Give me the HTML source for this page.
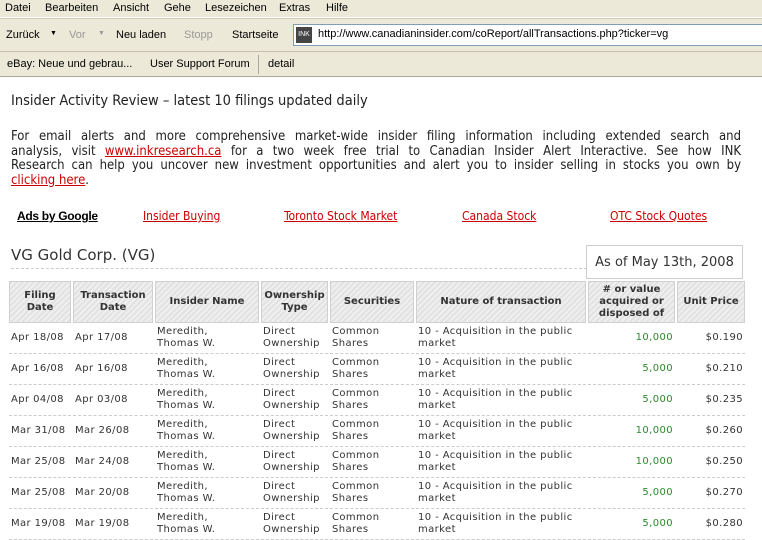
<!DOCTYPE html>
<html><head><meta charset="utf-8"><style>
*{margin:0;padding:0;box-sizing:border-box}
body{width:762px;height:529px;overflow:hidden;background:#fff;font-family:"DejaVu Sans Condensed","DejaVu Sans",sans-serif;position:relative}
.chrome{position:absolute;left:0;width:762px;background:#ece9d8;font-family:"Liberation Sans",sans-serif;font-size:11px;color:#000}
.m{top:0;height:18px;border-bottom:1px solid #fff}
.t{top:18px;height:34px;border-top:1px solid #d0ccb8;border-bottom:1px solid #c5c1ae}
.b{top:52px;height:25px;border-bottom:1px solid #aca899}
.chrome span{position:absolute}
.u{position:absolute;left:293px;top:5px;width:475px;height:22px;background:#fff;border:1px solid #7f9db9}
.abs{position:absolute}
.line{display:block;text-align:justify;text-align-last:justify;white-space:nowrap;height:14.5px}
a{color:#c00;text-decoration:underline}
.p{position:absolute;left:11px;width:730px;top:130px;font-size:13px;color:#222;line-height:14.5px}
.ad{position:absolute;top:209px;font-size:12px;font-family:"DejaVu Sans Condensed",sans-serif}
table{position:absolute;left:7px;top:281px;border-collapse:separate;border-spacing:2px 0;font-family:"DejaVu Sans",sans-serif;font-size:10px;color:#333}
th{background:repeating-linear-gradient(135deg,#e2e2e2 0 2px,#efefef 2px 4px);border:1px solid #d0d0d0;font-weight:bold;height:42px;font-size:10px;line-height:12px;color:#333;text-align:center}
td{height:31px;border-bottom:1px dashed #ccc;line-height:12px;vertical-align:middle;padding-left:2px;letter-spacing:0.4px;white-space:nowrap}
td.n{color:#2a8a2a;text-align:right;padding-right:2px}
td.r{text-align:right;padding-right:2px}
</style></head><body>
<div class="chrome m"><span style="left:5px;top:2px">Datei</span><span style="left:45px;top:2px">Bearbeiten</span><span style="left:113px;top:2px">Ansicht</span><span style="left:164px;top:2px">Gehe</span><span style="left:205px;top:2px">Lesezeichen</span><span style="left:279px;top:2px">Extras</span><span style="left:326px;top:2px">Hilfe</span></div>
<div class="chrome t"><span style="left:6px;top:10px">Zurück</span><span style="left:50px;top:11px;font-size:7px">▼</span><span style="left:69px;top:10px;color:#999">Vor</span><span style="left:98px;top:11px;font-size:7px;color:#999">▼</span><span style="left:116px;top:10px">Neu laden</span><span style="left:184px;top:10px;color:#999">Stopp</span><span style="left:232px;top:10px">Startseite</span>
<div class="u"><span style="left:2px;top:2px;width:16px;height:16px;background:#444;color:#fff;font-size:7px;line-height:16px;text-align:center">INK</span><span style="left:24px;top:3px">http://www.canadianinsider.com/coReport/allTransactions.php?ticker=vg</span></div></div>
<div class="chrome b"><span style="left:7px;top:6px">eBay: Neue und gebrau...</span><span style="left:150px;top:6px">User Support Forum</span><span style="left:258px;top:3px;height:19px;border-left:1px solid #aca899"></span><span style="left:268px;top:6px">detail</span></div>
<div class="abs" style="left:11px;top:93px;font-size:14.5px;color:#222">Insider Activity Review – latest 10 filings updated daily</div>
<div class="p"><span class="line">For email alerts and more comprehensive market-wide insider filing information including extended search and</span><span class="line">analysis, visit <a href="#">www.inkresearch.ca</a> for a two week free trial to Canadian Insider Alert Interactive. See how INK</span><span class="line">Research can help you uncover new investment opportunities and alert you to insider selling in stocks you own by</span><span style="display:block"><a href="#">clicking here</a>.</span></div>
<div class="ad" style="left:17px;font-weight:bold;color:#000;text-decoration:underline;font-family:'Liberation Sans',sans-serif;letter-spacing:-0.3px">Ads by Google</div>
<a class="ad" style="left:143px">Insider Buying</a>
<a class="ad" style="left:284px">Toronto Stock Market</a>
<a class="ad" style="left:462px">Canada Stock</a>
<a class="ad" style="left:610px">OTC Stock Quotes</a>
<div class="abs" style="left:11px;top:246px;font-size:15px;color:#333;font-family:'DejaVu Sans',sans-serif">VG Gold Corp. (VG)</div>
<div class="abs" style="left:11px;top:268px;width:576px;border-bottom:1px dashed #ccc"></div>
<div class="abs" style="left:586px;top:245px;width:157px;height:34px;border:1px solid #ccc;font-size:13px;color:#333;font-family:'DejaVu Sans',sans-serif;text-align:center;line-height:33px">As of May 13th, 2008</div>
<table>
<tr><th style="width:62px">Filing<br>Date</th><th style="width:80px">Transaction<br>Date</th><th style="width:104px">Insider Name</th><th style="width:67px">Ownership<br>Type</th><th style="width:84px">Securities</th><th style="width:170px">Nature of transaction</th><th style="width:87px"># or value<br>acquired or<br>disposed of</th><th style="width:68px">Unit Price</th></tr>
<tr><td>Apr 18/08</td><td>Apr 17/08</td><td>Meredith,<br>Thomas W.</td><td>Direct<br>Ownership</td><td>Common<br>Shares</td><td>10 - Acquisition in the public<br>market</td><td class="n">10,000</td><td class="r">$0.190</td></tr>
<tr><td>Apr 16/08</td><td>Apr 16/08</td><td>Meredith,<br>Thomas W.</td><td>Direct<br>Ownership</td><td>Common<br>Shares</td><td>10 - Acquisition in the public<br>market</td><td class="n">5,000</td><td class="r">$0.210</td></tr>
<tr><td>Apr 04/08</td><td>Apr 03/08</td><td>Meredith,<br>Thomas W.</td><td>Direct<br>Ownership</td><td>Common<br>Shares</td><td>10 - Acquisition in the public<br>market</td><td class="n">5,000</td><td class="r">$0.235</td></tr>
<tr><td>Mar 31/08</td><td>Mar 26/08</td><td>Meredith,<br>Thomas W.</td><td>Direct<br>Ownership</td><td>Common<br>Shares</td><td>10 - Acquisition in the public<br>market</td><td class="n">10,000</td><td class="r">$0.260</td></tr>
<tr><td>Mar 25/08</td><td>Mar 24/08</td><td>Meredith,<br>Thomas W.</td><td>Direct<br>Ownership</td><td>Common<br>Shares</td><td>10 - Acquisition in the public<br>market</td><td class="n">10,000</td><td class="r">$0.250</td></tr>
<tr><td>Mar 25/08</td><td>Mar 20/08</td><td>Meredith,<br>Thomas W.</td><td>Direct<br>Ownership</td><td>Common<br>Shares</td><td>10 - Acquisition in the public<br>market</td><td class="n">5,000</td><td class="r">$0.270</td></tr>
<tr><td>Mar 19/08</td><td>Mar 19/08</td><td>Meredith,<br>Thomas W.</td><td>Direct<br>Ownership</td><td>Common<br>Shares</td><td>10 - Acquisition in the public<br>market</td><td class="n">5,000</td><td class="r">$0.280</td></tr>
</table>
</body></html>
